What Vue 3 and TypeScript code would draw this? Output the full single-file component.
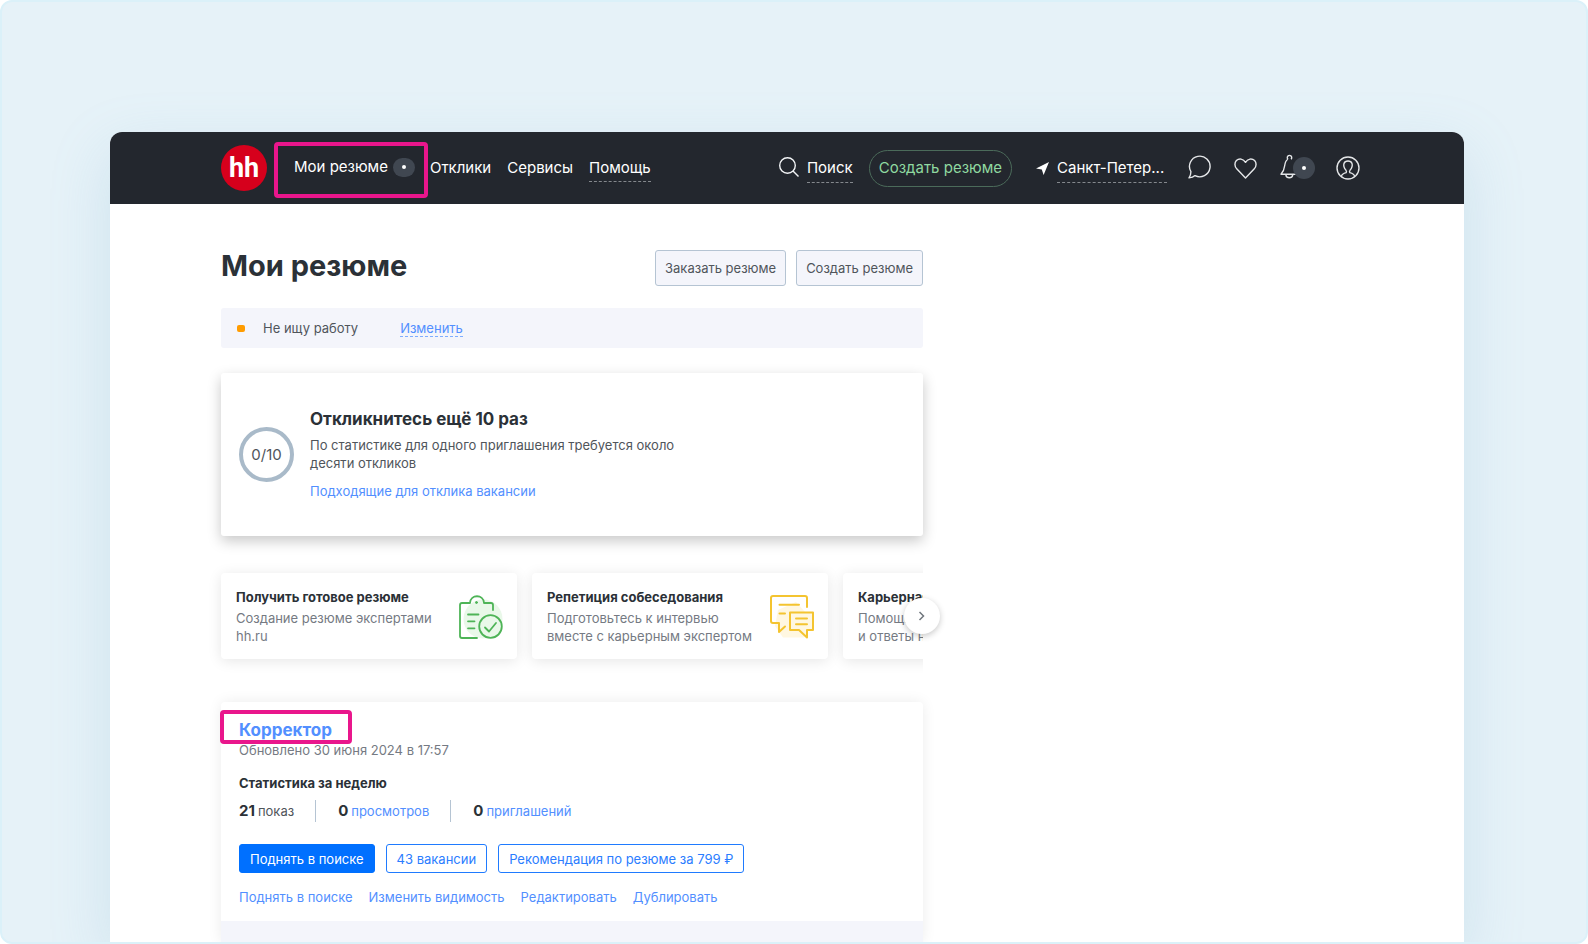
<script setup lang="ts">
interface Service {
  title: string
  lines: string[]
  icon: 'clipboard' | 'chat' | null
}

interface Stat {
  value: number
  label: string
  link: boolean
}

const services: Service[] = [
  { title: 'Получить готовое резюме', lines: ['Создание резюме экспертами', 'hh.ru'], icon: 'clipboard' },
  { title: 'Репетиция собеседования', lines: ['Подготовьтесь к интервью', 'вместе с карьерным экспертом'], icon: 'chat' },
  { title: 'Карьерная консультация', lines: ['Помощь в поиске работы', 'и ответы на вопросы'], icon: null },
]

const stats: Stat[] = [
  { value: 21, label: 'показ', link: false },
  { value: 0, label: 'просмотров', link: true },
  { value: 0, label: 'приглашений', link: true },
]

const actions: string[] = ['Поднять в поиске', 'Изменить видимость', 'Редактировать', 'Дублировать']
</script>

<template>
  <div class="frame">
    <div class="window">
      <header class="header">
        <a class="logo" href="#" aria-label="hh">hh</a>
        <nav class="nav">
          <a class="nav-current" href="#">Мои резюме<span class="badge"></span></a>
          <a href="#">Отклики</a>
          <a href="#">Сервисы</a>
          <a href="#"><span class="dashed">Помощь</span></a>
        </nav>
        <div class="tools">
          <a class="search" href="#">
            <svg width="20" height="22" viewBox="0 0 20 22" fill="none" stroke="#f1f3f5" stroke-width="1.4">
              <circle cx="8.5" cy="8.5" r="7.8" />
              <path d="M14 14l5.5 5.500" />
            </svg>
            <span class="dashed">Поиск</span>
          </a>
          <button class="create" type="button">Создать резюме</button>
          <button class="region" type="button">
            <svg width="13" height="13" viewBox="0 0 13 13" fill="#fff">
              <path d="M13 0L0 6.600l5.800.900L7.600 13z" />
            </svg>
            <span class="dashed region-name">Санкт-Петер...</span>
          </button>
          <button class="icon" type="button" aria-label="Сообщения">
            <svg width="23" height="27" viewBox="0 0 23 27" fill="none" stroke="#e4e6e8" stroke-width="1.400" stroke-linejoin="round">
              <path d="M2.900 16.700A10.300 10.300 0 1 1 7 20.600C5.500 22 3.500 22.700 1 22.900c1.200-1.700 1.900-3.600 1.900-6.200z" />
            </svg>
          </button>
          <button class="icon" type="button" aria-label="Избранное">
            <svg width="23" height="21" viewBox="0 0 23 21" fill="none" stroke="#e4e6e8" stroke-width="1.400" stroke-linejoin="round">
              <path d="M11.500 20L2.700 10.800C.400 8.300.400 4.700 2.400 2.600 5 .100 9.300.500 11.500 4.300 13.700.500 18 .100 20.600 2.600c2 2.100 2 5.700-.300 8.200z" />
            </svg>
          </button>
          <button class="icon bell" type="button" aria-label="Уведомления">
            <svg width="20" height="28" viewBox="0 0 20 28" fill="none" stroke="#e4e6e8" stroke-width="1.400" stroke-linejoin="round">
              <path d="M8 5.200a2.200 2.200 0 1 1 3 0M8 5C5.500 6.500 5 9 4.600 12c-.400 4-1.300 5.500-3.600 8.300h15.500" />
              <path d="M5.800 21a3.600 3.600 0 0 0 7 0" />
            </svg>
            <span class="badge bell-badge"></span>
          </button>
          <button class="icon" type="button" aria-label="Профиль">
            <svg width="24" height="24" viewBox="0 0 24 24" fill="none" stroke="#e4e6e8" stroke-width="1.400">
              <circle cx="12" cy="12" r="11" />
              <path d="M5.500 20c.300-1.700 1.700-2.500 4.700-3.400.500-.700.300-1.600-.300-2.400C8 11.700 7.300 9.400 8 7.400c1.200-3.200 6.800-3.200 8 0 .700 2 0 4.300-1.900 6.800-.600.800-.800 1.700-.300 2.400 3 .900 4.400 1.700 4.700 3.400" />
            </svg>
          </button>
        </div>
      </header>

      <main class="content">
        <div class="title-row">
          <h1>Мои резюме</h1>
          <div class="title-actions">
            <button class="grey-button" type="button">Заказать резюме</button>
            <button class="grey-button" type="button">Создать резюме</button>
          </div>
        </div>

        <section class="status">
          <span class="status-dot"></span>
          <span class="status-text">Не ищу работу</span>
          <button class="change" type="button">Изменить</button>
        </section>

        <section class="goal">
          <div class="ring">0/10</div>
          <div class="goal-body">
            <h2>Откликнитесь ещё 10 раз</h2>
            <p>По статистике для одного приглашения требуется около десяти откликов</p>
            <a href="#">Подходящие для отклика вакансии</a>
          </div>
        </section>

        <section class="carousel">
          <div class="track">
            <article v-for="service in services" :key="service.title" class="service">
              <div class="service-text">
                <h3>{{ service.title }}</h3>
                <p><span v-for="line in service.lines" :key="line">{{ line }}</span></p>
              </div>
              <svg v-if="service.icon === 'clipboard'" width="44" height="44" viewBox="0 0 44 44" fill="none" stroke="#4eb457" stroke-width="1.800" stroke-linecap="round" stroke-linejoin="round">
                <circle cx="24" cy="24" r="19.500" fill="#e9f8e9" stroke="none" />
                <path d="M34 15V10q0-2-2-2H25C24.500-1 11.500-1 11 8H3Q1 8 1 10V41q0 2 2 2H18" />
                <circle cx="17.500" cy="7.500" r="1" fill="#4eb457" stroke-width="1" />
                <path d="M9 19.500h10.500M9 26.300h6.500M9 33.300h6.500" />
                <circle cx="31.500" cy="31.500" r="11.300" fill="#e9f8e9" />
                <path d="M26 32.500l4 4 7-8.500" />
              </svg>
              <svg v-else-if="service.icon === 'chat'" width="44" height="44" viewBox="0 0 44 44" fill="none" stroke="#f4c430" stroke-width="2" stroke-linecap="round" stroke-linejoin="round">
                <path d="M8 15L26 7l10 11 4 12-6 12.500H13L5 31z" fill="#fff7e1" stroke="none" />
                <path d="M37 12V3q0-2-2-2H3Q1 1 1 3V26q0 2 2 2H9v9l6-5.500" />
                <path d="M9.500 9.800H29M9.500 18.500H15" />
                <path d="M20 17.500H43V35H37v7.500L29 35H20z" fill="#fff7e1" />
                <path d="M26 23.500H37M26 29.300H37" />
              </svg>
            </article>
          </div>
          <button class="next" type="button" aria-label="Вперёд">
            <svg width="8" height="10" viewBox="0 0 8 10" fill="none" stroke="#70767d" stroke-width="1.500">
              <path d="M1.500 1l4 4-4 4" />
            </svg>
          </button>
        </section>

        <section class="resume">
          <div class="resume-body">
            <h2><a class="resume-title" href="#">Корректор</a></h2>
            <p class="updated">Обновлено 30 июня 2024 в 17:57</p>
            <h3>Статистика за неделю</h3>
            <ul class="stats">
              <li v-for="stat in stats" :key="stat.label">
                <b>{{ stat.value }}</b>
                <a v-if="stat.link" href="#">{{ stat.label }}</a>
                <span v-else>{{ stat.label }}</span>
              </li>
            </ul>
            <div class="buttons">
              <button class="blue-button filled" type="button">Поднять в поиске</button>
              <button class="blue-button" type="button">43 вакансии</button>
              <button class="blue-button" type="button">Рекомендация по резюме за 799 ₽</button>
            </div>
            <div class="links">
              <a v-for="action in actions" :key="action" href="#">{{ action }}</a>
            </div>
          </div>
          <div class="resume-footer"></div>
        </section>
      </main>
    </div>
  </div>
</template>

<style>
body {
  margin: 0;
  background: #fff;
}
</style>

<style scoped>
* {
  box-sizing: border-box;
}

.frame {
  display: flex;
  min-height: 100vh;
  padding: 130px 122px 0 108px;
  overflow: hidden;
  border: 2px solid #dbf1f9;
  border-radius: 12px;
  background: #e6f2f8;
  color: #2b3137;
  font: 13px/18px Inter, "Liberation Sans", sans-serif;
}

h1,
h2,
h3,
p,
ul {
  margin: 0;
  padding: 0;
}

a {
  color: #528fff;
  text-decoration: none;
}

button {
  margin: 0;
  padding: 0;
  border: 0;
  background: none;
  color: inherit;
  font: inherit;
  cursor: pointer;
}

svg {
  display: block;
  flex: none;
}

.window {
  flex: 1;
  min-width: 0;
  border-radius: 12px 12px 0 0;
  background: #fff;
  box-shadow: 0 20px 60px rgba(120, 175, 205, 0.22);
}

.header {
  display: flex;
  align-items: center;
  height: 72px;
  padding: 0 104px 0 111px;
  border-radius: 12px 12px 0 0;
  background: #23272e;
  color: #fff;
  font-size: 15px;
  line-height: 20px;
  white-space: nowrap;
}

.header a {
  color: #fff;
}

.logo {
  width: 46px;
  height: 46px;
  margin-right: 7px;
  border-radius: 50%;
  background: #d6001c;
  font-family: Roboto, "Liberation Sans", sans-serif;
  font-size: 27px;
  font-weight: 700;
  line-height: 46px;
  text-align: center;
}

.nav {
  display: flex;
  align-items: center;
  gap: 16px;
}

.header .nav-current {
  display: flex;
  align-items: center;
  height: 56px;
  margin: 4px -14px 0 0;
  padding: 0 9px 6px 16px;
  border: 4px solid #e9168c;
  border-radius: 4px;
}

.badge {
  display: flex;
  align-items: center;
  justify-content: center;
  width: 22px;
  height: 19px;
  margin-left: 5px;
  border-radius: 10px;
  background: #404751;
}

.badge::after {
  content: "";
  width: 4px;
  height: 4px;
  border-radius: 2px;
  background: #fff;
}

.dashed {
  position: relative;
}

.dashed::after {
  content: "";
  position: absolute;
  right: 0;
  bottom: -5px;
  left: 0;
  border-bottom: 1px dashed #84888d;
}

.tools {
  display: flex;
  align-items: center;
  margin-left: auto;
}

.search,
.region {
  display: flex;
  align-items: center;
  gap: 8px;
}

.create {
  height: 37px;
  margin: 0 24px 0 16px;
  padding: 0 9px;
  border: 1px solid #4b6b5a;
  border-radius: 19px;
  color: #8fd9a0;
}

.region {
  margin-right: 21px;
}

.region-name {
  width: 110px;
  text-align: left;
}

.icon {
  display: flex;
  align-items: center;
  margin-right: 23px;
}

.icon:last-child {
  margin-right: 0;
}

.bell {
  margin-right: 21px;
}

.bell-badge {
  height: 22px;
  margin-left: -7px;
  border-radius: 11px;
}

.content {
  width: 702px;
  max-width: calc(100% - 222px);
  margin-left: 111px;
  padding-top: 46px;
}

.title-row {
  display: flex;
  justify-content: space-between;
  height: 36px;
}

h1 {
  font-size: 29px;
  font-weight: 700;
  line-height: 32px;
}

.title-actions {
  display: flex;
  gap: 10px;
}

.grey-button {
  padding: 0 9px;
  border: 1px solid #b5c4d3;
  border-radius: 3px;
  background: #f4f5fb;
  color: #50555b;
}

.status {
  display: flex;
  align-items: center;
  height: 40px;
  margin-top: 22px;
  padding: 0 16px;
  border-radius: 3px;
  background: #f4f5fb;
}

.status-dot {
  width: 8px;
  height: 7px;
  border-radius: 2px;
  background: #ff9c00;
}

.status-text {
  margin: 0 42px 0 18px;
  color: #50555b;
}

.change {
  border-bottom: 1px dashed #7fadff;
  color: #528fff;
  line-height: 16px;
}

.goal {
  display: flex;
  align-items: center;
  gap: 16px;
  margin-top: 25px;
  padding: 36px 18px;
  border-radius: 3px;
  background: #fff;
  box-shadow: 0 5px 14px rgba(0, 0, 0, 0.22);
}

.ring {
  flex: none;
  width: 55px;
  height: 55px;
  border: 4px solid #a9bac9;
  border-radius: 50%;
  color: #50555b;
  font-size: 15px;
  line-height: 47px;
  text-align: center;
}

.goal h2 {
  font-size: 17px;
  line-height: 20px;
}

.goal p {
  width: 370px;
  margin: 7px 0 10px;
  color: #50555b;
}

.goal a {
  display: block;
}

.carousel {
  position: relative;
  margin-top: 17px;
}

.track {
  display: flex;
  gap: 15px;
  margin-left: -20px;
  padding: 20px 0 20px 20px;
  overflow: hidden;
}

.service {
  display: flex;
  flex: none;
  justify-content: space-between;
  width: 296px;
  height: 86px;
  padding: 15px 14px 0 15px;
  border-radius: 4px;
  background: #fff;
  box-shadow: 0 2px 14px rgba(0, 0, 0, 0.1);
  white-space: nowrap;
}

.service svg {
  margin-top: 7px;
}

.service p {
  margin-top: 3px;
  color: #757a83;
}

.service span {
  display: block;
}

h3 {
  font-size: 13px;
  font-weight: 700;
  line-height: 18px;
}

.next {
  position: absolute;
  top: 45px;
  right: -17px;
  display: flex;
  align-items: center;
  justify-content: center;
  width: 36px;
  height: 36px;
  border-radius: 50%;
  background: #fff;
  box-shadow: 0 2px 6px rgba(0, 0, 0, 0.22);
}

.resume {
  margin-top: 23px;
  border-radius: 4px 4px 0 0;
  box-shadow: 0 0 14px rgba(0, 0, 0, 0.08);
}

.resume-body {
  padding: 17px 18px 15px;
}

.resume h2 {
  font-size: 17px;
  line-height: 22px;
}

.resume-title {
  position: relative;
}

.resume-title::before {
  content: "";
  position: absolute;
  inset: -10px -20px -4px -19px;
  border: 4px solid #e9168c;
  border-radius: 4px;
}

.updated {
  color: #757a83;
}

.resume h3 {
  margin-top: 15px;
}

.stats {
  display: flex;
  align-items: center;
  margin-top: 8px;
  list-style: none;
}

.stats li {
  display: flex;
  align-items: baseline;
  gap: 3px;
  padding-right: 21px;
  color: #50555b;
  line-height: 21px;
}

.stats li + li {
  padding-left: 22px;
  border-left: 1px solid #b5c4d3;
}

.stats b {
  color: #2b3137;
  font-size: 15px;
}

.buttons {
  display: flex;
  gap: 11px;
  margin-top: 22px;
}

.blue-button {
  height: 29px;
  padding: 0 10px;
  border: 1px solid #1f7bff;
  border-radius: 3px;
  color: #2b7dff;
  white-space: nowrap;
}

.filled {
  border-color: #0070ff;
  background: #0070ff;
  color: #fff;
}

.links {
  display: flex;
  gap: 16px;
  margin-top: 15px;
}

.resume-footer {
  height: 21px;
  background: #f4f5fb;
}
</style>
